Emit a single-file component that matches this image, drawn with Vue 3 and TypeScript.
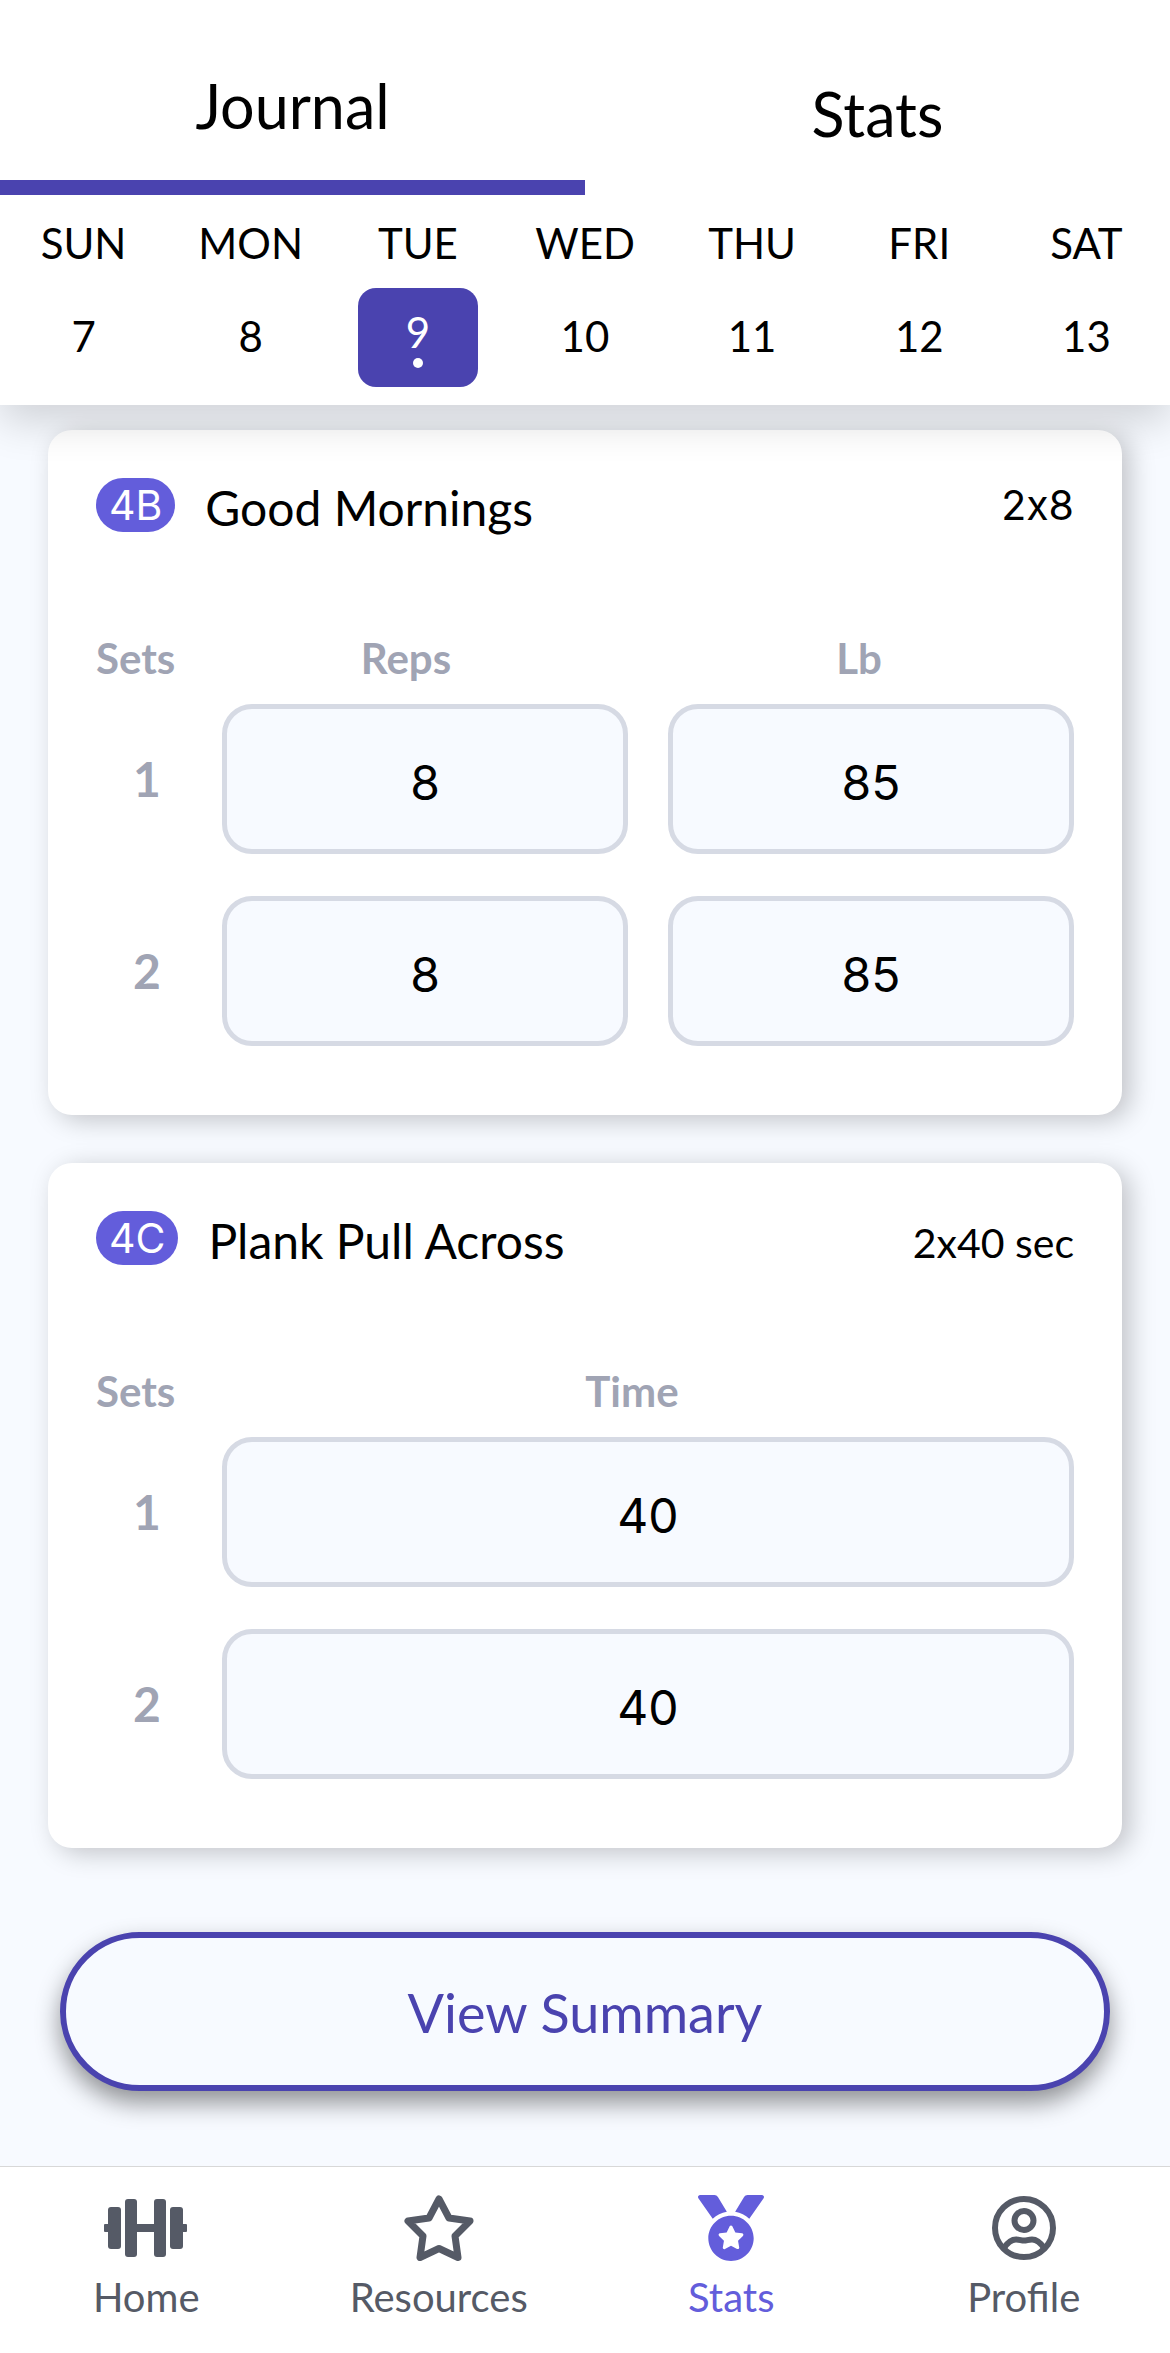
<script setup lang="ts">
import { reactive, ref } from 'vue'

interface Day {
  name: string
  date: number
}

interface Exercise {
  code: string
  title: string
  target: string
  systemTarget: boolean
  columns: string[]
  sets: string[][]
}

const tabs = ['Journal', 'Stats']
const activeTab = ref('Journal')

const days: Day[] = [
  { name: 'SUN', date: 7 },
  { name: 'MON', date: 8 },
  { name: 'TUE', date: 9 },
  { name: 'WED', date: 10 },
  { name: 'THU', date: 11 },
  { name: 'FRI', date: 12 },
  { name: 'SAT', date: 13 },
]
const selectedDate = ref(9)

const exercises = reactive<Exercise[]>([
  {
    code: '4B',
    title: 'Good Mornings',
    target: '2x8',
    systemTarget: true,
    columns: ['Reps', 'Lb'],
    sets: [['8', '85'], ['8', '85']],
  },
  {
    code: '4C',
    title: 'Plank Pull Across',
    target: '2x40 sec',
    systemTarget: false,
    columns: ['Time'],
    sets: [['40'], ['40']],
  },
])

const navItems = ['Home', 'Resources', 'Stats', 'Profile']
const activeNav = 'Stats'
</script>

<template>
  <div class="app">
    <header class="top">
      <div class="tabs">
        <button
          v-for="tab in tabs"
          :key="tab"
          type="button"
          class="tab"
          :class="{ active: tab === activeTab }"
          @click="activeTab = tab"
        >{{ tab }}</button>
      </div>
      <div class="week">
        <button
          v-for="day in days"
          :key="day.name"
          type="button"
          class="day"
          @click="selectedDate = day.date"
        >
          <span class="day-name">{{ day.name }}</span>
          <span class="day-date" :class="{ selected: day.date === selectedDate }">
            {{ day.date }}
            <span v-if="day.date === selectedDate" class="dot"></span>
          </span>
        </button>
      </div>
    </header>

    <main class="content">
      <section v-for="exercise in exercises" :key="exercise.code" class="card">
        <div class="card-head">
          <span class="badge">{{ exercise.code }}</span>
          <h2 class="title">{{ exercise.title }}</h2>
          <span class="target" :class="{ system: exercise.systemTarget }">{{ exercise.target }}</span>
        </div>
        <table class="sets" :class="{ split: exercise.columns.length > 1 }">
          <thead>
            <tr>
              <th class="set-col" scope="col">Sets</th>
              <th v-for="column in exercise.columns" :key="column" scope="col">{{ column }}</th>
            </tr>
          </thead>
          <tbody>
            <tr v-for="(set, row) in exercise.sets" :key="row">
              <th class="set-number" scope="row">{{ row + 1 }}</th>
              <td v-for="(column, index) in exercise.columns" :key="column">
                <input
                  v-model="set[index]"
                  type="text"
                  inputmode="numeric"
                  :aria-label="`${exercise.title}, set ${row + 1}, ${column}`"
                />
              </td>
            </tr>
          </tbody>
        </table>
      </section>

      <button type="button" class="summary">View Summary</button>
    </main>

    <nav class="nav">
      <a v-for="item in navItems" :key="item" href="#" :class="{ active: item === activeNav }">
        <svg v-if="item === 'Home'" width="84" height="66" viewBox="0 0 84 66" fill="currentColor" aria-hidden="true">
          <rect x="0" y="29" width="8" height="8" rx="1" />
          <rect x="75" y="29" width="8" height="8" rx="1" />
          <rect x="30" y="29" width="24" height="8" />
          <rect x="4" y="12" width="13" height="42" rx="3" />
          <rect x="66" y="12" width="13" height="42" rx="3" />
          <rect x="21" y="4" width="12" height="58" rx="3" />
          <rect x="50" y="4" width="12" height="58" rx="3" />
        </svg>
        <svg v-else-if="item === 'Resources'" width="70" height="66" viewBox="0 0 70 66" fill="none" stroke="currentColor" stroke-width="7" stroke-linejoin="round" aria-hidden="true">
          <path d="M35 4 L45 23 L66 26 L51 41 L54 62.500 L35 53.500 L16 62.500 L19 41 L4 26 L25 23 Z" />
        </svg>
        <svg v-else-if="item === 'Stats'" width="66" height="66" viewBox="0 0 512 512" fill="currentColor" aria-hidden="true">
          <path d="M223.750 130.750L154.620 15.540A31.997 31.997 0 0 0 127.180 0H16.030C3.080 0-4.500 14.570 2.920 25.180l111.270 158.960c29.720-27.770 67.520-46.830 109.560-53.390zM495.970 0H384.820c-11.240 0-21.660 5.900-27.440 15.540l-69.130 115.210c42.040 6.560 79.840 25.620 109.560 53.380L509.080 25.180C516.500 14.570 508.920 0 495.970 0zM256 160c-97.200 0-176 78.800-176 176s78.800 176 176 176 176-78.800 176-176-78.800-176-176-176zm92.520 157.260l-37.930 36.960 8.970 52.220c1.600 9.360-8.260 16.510-16.650 12.090L256 393.880l-46.900 24.650c-8.400 4.450-18.250-2.740-16.650-12.090l8.970-52.220-37.930-36.960c-6.820-6.640-3.050-18.230 6.350-19.590l52.430-7.640 23.430-47.520c2.110-4.280 6.190-6.390 10.280-6.390 4.110 0 8.220 2.140 10.330 6.390l23.430 47.520 52.430 7.640c9.400 1.360 13.170 12.950 6.350 19.590z" />
        </svg>
        <svg v-else width="66" height="66" viewBox="0 0 66 66" fill="none" stroke="currentColor" stroke-width="6" aria-hidden="true">
          <circle cx="33" cy="33" r="29" />
          <circle cx="33" cy="25.500" r="9.500" />
          <path d="M13 53 C17 47 21 44.500 25 44.500 C29 44.500 30 45.500 33 45.500 C36 45.500 37 44.500 41 44.500 C45 44.500 49 47 53 53" />
        </svg>
        <span>{{ item }}</span>
      </a>
    </nav>
  </div>
</template>

<style>
body {
  margin: 0;
  background: #f7faff;
}
</style>

<style scoped>
.app {
  display: flex;
  flex-direction: column;
  min-height: 100vh;
  font-family: Lato, sans-serif;
  color: #000;
  background: #f7faff;
}

button {
  font: inherit;
  color: inherit;
  background: none;
  border: 0;
  padding: 0;
  cursor: pointer;
}

.top {
  position: relative;
  z-index: 1;
  background: #fff;
  box-shadow: 0 16px 40px rgba(0, 0, 0, 0.16);
}

.tabs {
  display: flex;
  height: 195px;
}

.tab {
  flex: 1;
  box-sizing: border-box;
  padding-top: 32px;
  font-size: 61px;
  line-height: 72px;
}

.tab.active {
  border-bottom: 15px solid #4a43af;
}

.week {
  display: grid;
  grid-template-columns: repeat(7, 1fr);
  padding: 24px 0 18px;
}

.day {
  display: flex;
  flex-direction: column;
  align-items: center;
  gap: 21px;
  font-size: 42px;
  line-height: 48px;
}

.day-date {
  display: flex;
  flex-direction: column;
  align-items: center;
  justify-content: center;
  box-sizing: border-box;
  width: 120px;
  height: 99px;
  padding-bottom: 4px;
  border-radius: 18px;
}

.day-date.selected {
  padding-bottom: 0;
  color: #fff;
  background: #4a43af;
}

.dot {
  width: 10px;
  height: 10px;
  margin-top: 2px;
  border-radius: 50%;
  background: #fff;
}

.content {
  flex: 1;
  display: flex;
  flex-direction: column;
  gap: 48px;
  padding: 25px 48px 75px;
}

.card {
  padding: 48px 48px 69px;
  border-radius: 24px;
  background: #fff;
  box-shadow: 8px 5px 26px rgba(0, 0, 0, 0.22);
}

.card-head {
  display: flex;
  align-items: flex-start;
  height: 154px;
}

.badge {
  padding: 0 13px;
  border-radius: 27px;
  font-family: Inter, sans-serif;
  font-size: 41px;
  line-height: 54px;
  color: #fff;
  background: #635ddb;
}

.title {
  flex: 1;
  margin: 0;
  padding: 0 0 0 30px;
  font-size: 48px;
  font-weight: 400;
  line-height: 60px;
}

.target {
  padding-top: 6px;
  font-size: 41px;
  line-height: 52px;
}

.target.system {
  padding-top: 1px;
  font-family: Inter, sans-serif;
  font-feature-settings: "calt" 0;
}

.sets {
  width: 100%;
  table-layout: fixed;
  border-collapse: collapse;
}

.sets th {
  padding: 0;
  font-size: 42px;
  font-weight: 700;
  line-height: 52px;
  color: #a0a4b4;
}

.sets thead th {
  padding-bottom: 20px;
}

.sets thead th:nth-child(2) {
  padding-right: 32px;
}

.sets.split thead th:nth-child(2) {
  padding-right: 58px;
}

.sets.split thead th:nth-child(3) {
  padding-right: 4px;
}

.sets thead .set-col {
  width: 126px;
  text-align: left;
}

.sets .set-number {
  padding-right: 24px;
  font-size: 48px;
}

.sets td {
  padding: 0;
}

.sets.split td:nth-child(2) {
  padding-right: 20px;
}

.sets.split td:nth-child(3) {
  padding-left: 20px;
}

.sets tbody tr + tr > * {
  padding-top: 42px;
}

.sets input {
  display: block;
  box-sizing: border-box;
  width: 100%;
  height: 150px;
  padding: 6px 0 0;
  border: 5px solid #d6dae4;
  border-radius: 30px;
  font-family: Inter, sans-serif;
  font-size: 48px;
  text-align: center;
  color: #000;
  background: #f7faff;
}

.summary {
  height: 159px;
  margin: 36px 12px 0;
  padding-top: 2px;
  border: 6px solid #4a43af;
  border-radius: 80px;
  font-size: 54px;
  color: #4a43af;
  background: #f7faff;
  box-shadow: 0 12px 24px rgba(0, 0, 0, 0.42);
}

.nav {
  display: grid;
  grid-template-columns: repeat(4, 1fr);
  box-sizing: border-box;
  height: 188px;
  padding-top: 28px;
  border-top: 1px solid #d8d8d8;
  background: #fff;
}

.nav a {
  display: flex;
  flex-direction: column;
  align-items: center;
  gap: 12px;
  font-size: 40px;
  line-height: 48px;
  color: #555a66;
  text-decoration: none;
}

.nav a.active {
  color: #635ddb;
}
</style>
